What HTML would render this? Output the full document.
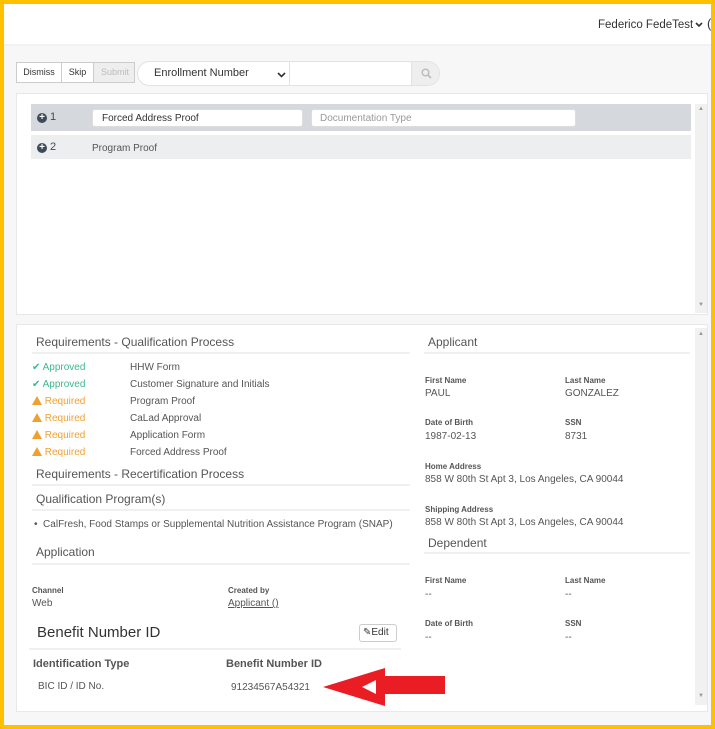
<!DOCTYPE html><html><head><style>
*{margin:0;padding:0;box-sizing:border-box}
body{width:715px;height:729px;background:#fff;font-family:"Liberation Sans",Arial,sans-serif;color:#444;position:relative;overflow:hidden}
.a{position:absolute;white-space:nowrap}
.frame{position:absolute;left:0;top:0;width:715px;height:729px;border:4px solid #FFC000;pointer-events:none;z-index:5}
.lbl{font-size:8px;font-weight:bold;color:#555}
.val{font-size:10px;color:#555}
.h{font-size:12px;color:#555}
.hr{position:absolute;height:2px;background:#eef0f2}
.ok{color:#3cb98f;font-size:10px}
.rq{color:#f0a030;font-size:10px}
.doc{font-size:10px;color:#555}
.warn{display:inline-block;width:0;height:0;border-left:5px solid transparent;border-right:5px solid transparent;border-bottom:9px solid #f0a030;vertical-align:-1px;position:relative}
</style></head><body>
<div class="frame"></div>
<div class="a" style="left:4px;top:4px;width:707px;height:42px;background:#fff;border-bottom:2px solid #f2f2f2"></div>
<div class="a" style="left:598px;top:19px;font-size:11.5px;color:#333">Federico FedeTest</div>
<svg class="a" style="left:695px;top:22px" width="8" height="6"><path d="M1 1l3 3 3-3" stroke="#333" stroke-width="1.6" fill="none"/></svg>
<div class="a" style="left:707px;top:16px;font-size:13px;color:#333">(</div>
<div class="a" style="left:4px;top:46px;width:707px;height:679px;background:#f7f7f7"></div>
<!-- toolbar -->
<div class="a" style="left:16px;top:62px;width:119px;height:21px;border:1px solid #ccc;background:#fff;font-size:9px;overflow:hidden">
<span class="a" style="left:0;top:0;width:45px;height:19px;line-height:19px;text-align:center;border-right:1px solid #ccc;color:#333">Dismiss</span>
<span class="a" style="left:45px;top:0;width:32px;height:19px;line-height:19px;text-align:center;border-right:1px solid #ccc;color:#333">Skip</span>
<span class="a" style="left:77px;top:0;width:42px;height:19px;line-height:19px;text-align:center;background:#eee;color:#bbb">Submit</span></div>
<div class="a" style="left:137px;top:61px;width:303px;height:25px;border:1px solid #e2e2e2;border-radius:13px;background:#fff;overflow:hidden">
<span class="a" style="left:16px;top:5px;font-size:11px;color:#333">Enrollment Number</span>
<svg class="a" style="left:139px;top:10px" width="9" height="6"><path d="M1 1l3.5 3.5L8 1" stroke="#333" stroke-width="1.6" fill="none"/></svg>
<span class="a" style="left:151px;top:0;width:1px;height:25px;background:#e2e2e2"></span>
<span class="a" style="left:273px;top:0;width:30px;height:25px;background:#eee;border-left:1px solid #e2e2e2"></span>
<svg class="a" style="left:283px;top:6px" width="11" height="11" viewBox="0 0 11 11"><circle cx="4.5" cy="4.5" r="3.3" fill="none" stroke="#bbb" stroke-width="1.4"/><path d="M7 7l3 3" stroke="#bbb" stroke-width="1.6"/></svg></div>
<!-- upper panel -->
<div class="a" style="left:16px;top:93px;width:692px;height:222px;background:#fff;border:1px solid #e8e8e8"></div>
<div class="a" style="left:31px;top:104px;width:660px;height:27px;background:#d5d8dc"></div>
<div class="a" style="left:31px;top:135px;width:660px;height:24px;background:#eceef0"></div>
<div class="a" style="left:37px;top:111px;font-size:11px;color:#3e4a5a"><span style="display:inline-block;width:10px;height:10px;border-radius:50%;background:#3e4a5a;color:#fff;font-size:10px;line-height:9px;text-align:center;font-weight:bold">+</span> 1</div>
<div class="a" style="left:37px;top:141px;font-size:11px;color:#3e4a5a"><span style="display:inline-block;width:10px;height:10px;border-radius:50%;background:#3e4a5a;color:#fff;font-size:10px;line-height:9px;text-align:center;font-weight:bold">+</span> 2</div>
<div class="a" style="left:92px;top:109px;width:211px;height:18px;background:#fff;border:1px solid #ddd;border-radius:3px;font-size:10px;color:#333;padding:3px 9px">Forced Address Proof</div>
<div class="a" style="left:311px;top:109px;width:265px;height:18px;background:#fff;border:1px solid #ddd;border-radius:3px;font-size:10px;color:#999;padding:3px 8px">Documentation Type</div>
<div class="a doc" style="left:92px;top:143px">Program Proof</div>
<div class="a" style="left:695px;top:104px;width:12px;height:209px;background:#f1f1f1"></div>
<div class="a" style="left:698px;top:106px;font-size:6px;color:#999">&#9650;</div>
<div class="a" style="left:698px;top:302px;font-size:6px;color:#999">&#9660;</div>
<!-- lower panel -->
<div class="a" style="left:16px;top:324px;width:692px;height:388px;background:#fff;border:1px solid #e8e8e8"></div>
<div class="a" style="left:695px;top:328px;width:12px;height:377px;background:#f1f1f1"></div>
<div class="a" style="left:698px;top:331px;font-size:6px;color:#999">&#9650;</div>
<div class="a" style="left:698px;top:693px;font-size:6px;color:#999">&#9660;</div>
<div class="a h" style="left:36px;top:335px">Requirements - Qualification Process</div>
<div class="hr" style="left:32px;top:352px;width:378px"></div>
<div class="a ok" style="left:32px;top:362px">&#10004; Approved</div><div class="a doc" style="left:130px;top:362px">HHW Form</div>
<div class="a ok" style="left:32px;top:379px">&#10004; Approved</div><div class="a doc" style="left:130px;top:379px">Customer Signature and Initials</div>
<div class="a rq" style="left:32px;top:396px"><span class="warn"></span> Required</div><div class="a doc" style="left:130px;top:396px">Program Proof</div>
<div class="a rq" style="left:32px;top:413px"><span class="warn"></span> Required</div><div class="a doc" style="left:130px;top:413px">CaLad Approval</div>
<div class="a rq" style="left:32px;top:430px"><span class="warn"></span> Required</div><div class="a doc" style="left:130px;top:430px">Application Form</div>
<div class="a rq" style="left:32px;top:447px"><span class="warn"></span> Required</div><div class="a doc" style="left:130px;top:447px">Forced Address Proof</div>
<div class="a h" style="left:36px;top:467px">Requirements - Recertification Process</div>
<div class="hr" style="left:32px;top:484px;width:378px"></div>
<div class="a h" style="left:36px;top:492px">Qualification Program(s)</div>
<div class="hr" style="left:32px;top:509px;width:378px"></div>
<div class="a doc" style="left:34px;top:519px">&#8226;&nbsp; CalFresh, Food Stamps or Supplemental Nutrition Assistance Program (SNAP)</div>
<div class="a h" style="left:36px;top:545px">Application</div>
<div class="hr" style="left:32px;top:563px;width:378px"></div>
<div class="a lbl" style="left:32px;top:586px">Channel</div><div class="a val" style="left:32px;top:598px">Web</div>
<div class="a lbl" style="left:228px;top:586px">Created by</div><div class="a val" style="left:228px;top:598px;text-decoration:underline">Applicant ()</div>
<div class="a" style="left:37px;top:624px;font-size:15px;color:#333">Benefit Number ID</div>
<div class="a" style="left:359px;top:624px;width:38px;height:18px;border:1px solid #ccc;border-radius:3px;font-size:10px;color:#333;padding:2px 3px">&#9998;Edit</div>
<div class="hr" style="left:29px;top:648px;width:372px"></div>
<div class="a" style="left:33px;top:658px;font-size:11px;font-weight:bold;color:#555">Identification Type</div>
<div class="a" style="left:226px;top:658px;font-size:11px;font-weight:bold;color:#555">Benefit Number ID</div>
<div class="a val" style="left:38px;top:681px">BIC ID / ID No.</div>
<div class="a val" style="left:231px;top:682px">91234567A54321</div>
<svg class="a" style="left:320px;top:665px" width="130" height="42"><polygon points="3,22 65,3 65,11 125,11 125,29 65,29 65,41" fill="#ea1c24"/><polygon points="42,22 56,15 56,29" fill="#fff"/></svg>
<!-- right column -->
<div class="a h" style="left:428px;top:335px">Applicant</div>
<div class="hr" style="left:424px;top:352px;width:266px"></div>
<div class="a lbl" style="left:425px;top:376px">First Name</div><div class="a val" style="left:425px;top:388px">PAUL</div>
<div class="a lbl" style="left:565px;top:376px">Last Name</div><div class="a val" style="left:565px;top:388px">GONZALEZ</div>
<div class="a lbl" style="left:425px;top:418px">Date of Birth</div><div class="a val" style="left:425px;top:431px">1987-02-13</div>
<div class="a lbl" style="left:565px;top:418px">SSN</div><div class="a val" style="left:565px;top:431px">8731</div>
<div class="a lbl" style="left:425px;top:462px">Home Address</div><div class="a val" style="left:425px;top:474px">858 W 80th St Apt 3, Los Angeles, CA 90044</div>
<div class="a lbl" style="left:425px;top:505px">Shipping Address</div><div class="a val" style="left:425px;top:517px">858 W 80th St Apt 3, Los Angeles, CA 90044</div>
<div class="a h" style="left:428px;top:536px">Dependent</div>
<div class="hr" style="left:424px;top:552px;width:266px"></div>
<div class="a lbl" style="left:425px;top:576px">First Name</div><div class="a val" style="left:425px;top:589px">--</div>
<div class="a lbl" style="left:565px;top:576px">Last Name</div><div class="a val" style="left:565px;top:589px">--</div>
<div class="a lbl" style="left:425px;top:619px">Date of Birth</div><div class="a val" style="left:425px;top:632px">--</div>
<div class="a lbl" style="left:565px;top:619px">SSN</div><div class="a val" style="left:565px;top:632px">--</div>
</body></html>
